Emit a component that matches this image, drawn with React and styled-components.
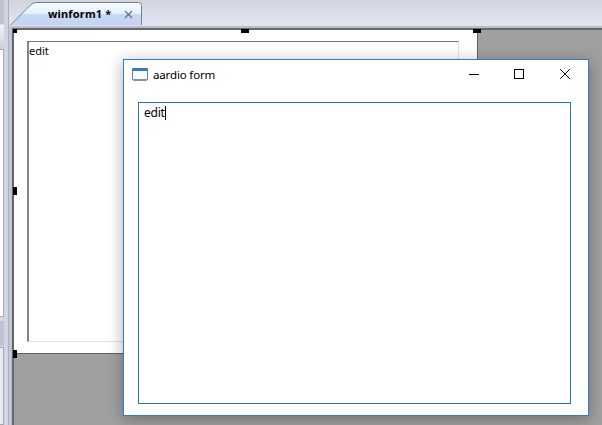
import React from "react";
import styled, { createGlobalStyle } from "styled-components";

const GlobalStyle = createGlobalStyle`
  * { box-sizing: border-box; }
  body { margin: 0; overflow: hidden; }
`;

const Desktop = styled.div`
  position: relative;
  display: flex;
  width: 602px;
  height: 425px;
  overflow: hidden;
  background: #a0a0a0;
  color: #000;
  font-family: "Noto Sans", "Open Sans", sans-serif;
`;

const SidePanels = styled.div`
  display: flex;
  flex-direction: column;
  width: 4px;
  background: #e9ebf3;
`;

const PanelHeader = styled.div`
  height: ${(p) => p.$height}px;
  background: #bfc1d0;
  border-bottom: 1px solid #d9dce8;
`;

const PanelTools = styled.div`
  height: ${(p) => p.$height}px;
  background: linear-gradient(#f4f5fa, #c9cedc);
`;

const PanelBody = styled.div`
  height: ${(p) => p.$height}px;
  background: ${(p) => p.$color || "#fff"};
  border: solid #a5a8b2;
  border-width: 1px 1px 1px 0;
`;

const Gap = styled.div`
  height: 4px;
  background: #d6dae4;
`;

const Splitter = styled.div`
  width: 4px;
  background: #ced6df;
`;

const Workspace = styled.div`
  flex: 1;
  display: flex;
  flex-direction: column;
  min-width: 0;
  border-left: 1px solid #abb0c0;
`;

const TabBar = styled.div`
  height: 25px;
  padding-left: 1px;
  background: linear-gradient(#d1d3de, #e3e6f0);
`;

const Tab = styled.div`
  position: relative;
  display: flex;
  align-items: center;
  width: 132px;
  height: 25px;
  padding: 3px 0 0 38px;
`;

const TabShape = styled.svg`
  position: absolute;
  inset: 0;
`;

const TabTitle = styled.span`
  position: relative;
  width: 63px;
  font-size: 11px;
  letter-spacing: 0.17px;
  line-height: 16px;
  font-weight: 700;
  white-space: nowrap;
`;

const TabClose = styled.svg`
  position: relative;
  margin-left: 13px;
`;

const Designer = styled.div`
  flex: 1;
  border-left: 2px solid #c5c9db;
  border-top: 1px solid #e0e3ef;
  background: #babdcb;
  padding: 2px 0 0 1px;
`;

const Canvas = styled.div`
  height: 100%;
  border: solid #66666c;
  border-width: 2px 0 0 2px;
  background: #a0a0a0;
`;

const DesignForm = styled.div`
  position: relative;
  width: 464px;
  height: 324px;
  padding: 11px 18px 11px 13px;
  background: #fff;
  border: solid #5e5e5e;
  border-width: 0 1px 1px 0;
`;

const DesignEdit = styled.div`
  height: 301px;
  border: 1px solid #e3e3e3;
  border-top-color: #767676;
  border-left: 2px solid #858585;
  padding: 1px 0 0 0;
  font-size: 11px;
  line-height: 15px;
`;

const Handle = styled.i`
  position: absolute;
  left: ${(p) => p.$x}px;
  top: ${(p) => p.$y}px;
  width: ${(p) => p.$w || 4}px;
  height: ${(p) => p.$h || 4}px;
  background: #000;
`;

const AppWindow = styled.section`
  position: absolute;
  left: 123px;
  top: 59px;
  width: 466px;
  height: 357px;
  display: flex;
  flex-direction: column;
  border: 1px solid #2b7fc6;
  background: #fff;
  box-shadow: 0 3px 15px 0 rgba(0, 0, 0, 0.32);
`;

const TitleBar = styled.header`
  display: flex;
  align-items: center;
  height: 28px;
  padding: 0 18px 0 8px;
`;

const WindowTitle = styled.span`
  flex: 1;
  margin-left: 5px;
  padding-top: 1px;
  font-size: 11.5px;
  letter-spacing: -0.15px;
  line-height: 16px;
`;

const WindowButtons = styled.div`
  display: grid;
  grid-template-columns: 45px 46px 10px;
`;

const EditBox = styled.div`
  display: flex;
  align-items: flex-start;
  width: 433px;
  height: 302px;
  margin: 14px 0 0 14px;
  padding: 2px 0 0 5px;
  border: 1px solid #1f73b7;
  font-size: 12px;
  letter-spacing: -0.25px;
  line-height: 16px;
`;

const Caret = styled.span`
  width: 1px;
  height: 14px;
  margin-top: 1px;
  background: #000;
`;

const handles = [
  { x: -1, y: -1 },
  { x: 227, y: -1, w: 8 },
  { x: 459, y: -1, w: 8 },
  { x: -1, y: 157, h: 8 },
  { x: -1, y: 320, h: 8 },
];

function EditorTab() {
  return (
    <Tab>
      <TabShape width="132" height="25">
        <defs>
          <linearGradient id="tabFill" x1="0" y1="0" x2="0" y2="1">
            <stop offset="0" stopColor="#f4fdff" />
            <stop offset="0.5" stopColor="#e2f0fc" />
            <stop offset="0.52" stopColor="#c7d8f5" />
            <stop offset="1" stopColor="#c4d3f2" />
          </linearGradient>
        </defs>
        <path
          d="M.5 25 L20 5.5 Q23 2.5 26 2.5 H128.5 Q131.5 2.5 131.5 5.5 V25"
          fill="url(#tabFill)"
          stroke="#7d8087"
        />
      </TabShape>
      <TabTitle>winform1 *</TabTitle>
      <TabClose width="9" height="9" viewBox="0 0 9 9">
        <path d="M1 1 8 8M8 1 1 8" stroke="#6c7480" strokeWidth="1.3" />
      </TabClose>
    </Tab>
  );
}

export default function App() {
  return (
    <>
      <GlobalStyle />
      <Desktop>
        <SidePanels>
          <PanelHeader $height={25} />
          <PanelTools $height={24} />
          <PanelBody $height={268} />
          <Gap />
          <PanelHeader $height={26} />
          <PanelBody $height={78} $color="#e9ebf3" />
        </SidePanels>
        <Splitter />
        <Workspace>
          <TabBar>
            <EditorTab />
          </TabBar>
          <Designer>
            <Canvas>
              <DesignForm>
                <DesignEdit>edit</DesignEdit>
                {handles.map((h) => (
                  <Handle key={`${h.x}-${h.y}`} $x={h.x} $y={h.y} $w={h.w} $h={h.h} />
                ))}
              </DesignForm>
            </Canvas>
          </Designer>
        </Workspace>
        <AppWindow>
          <TitleBar>
            <svg width="16" height="14" viewBox="0 0 16 14">
              <rect x=".5" y="1.5" width="15" height="11.5" rx="1" fill="#fafdff" stroke="#6483b4" />
              <path d="M0 4V2Q0 1 1 1H15Q16 1 16 2V4Z" fill="#347dc1" />
              <path d="M1 13H15" stroke="#56657d" />
            </svg>
            <WindowTitle>aardio form</WindowTitle>
            <WindowButtons>
              <svg width="10" height="10" viewBox="0 0 10 10">
                <path d="M0 5.5H10" stroke="#000" />
              </svg>
              <svg width="10" height="10" viewBox="0 0 10 10">
                <rect x=".5" y=".5" width="9" height="9" fill="none" stroke="#000" />
              </svg>
              <svg width="10" height="10" viewBox="0 0 10 10">
                <path d="M.2.2 9.8 9.8M9.8.2.2 9.8" stroke="#000" />
              </svg>
            </WindowButtons>
          </TitleBar>
          <EditBox>
            edit
            <Caret />
          </EditBox>
        </AppWindow>
      </Desktop>
    </>
  );
}
